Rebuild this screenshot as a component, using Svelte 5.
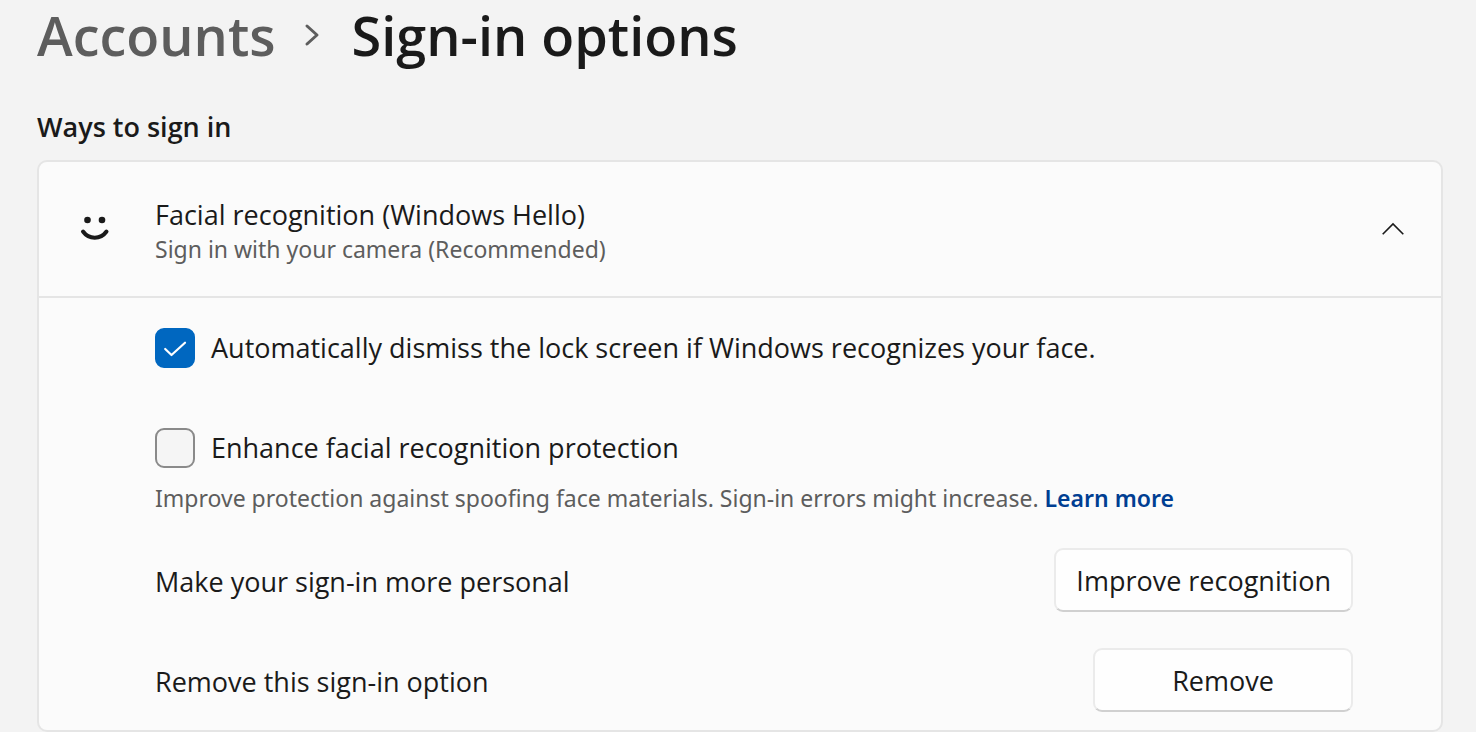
<script>
  let dismiss = true;
  let enhance = false;
  let open = true;
</script>

<style>
  :global(body) {
    background: #f3f3f3;
    color: #1a1a1a;
    font-family: "Segoe UI", "Open Sans", "Noto Sans", sans-serif;
    font-size: 27px;
    line-height: 36px;
  }

  main {
    padding: 0 33px 0 37px;
  }

  nav {
    display: flex;
    align-items: center;
    height: 70px;
    font-size: 54px;
    font-weight: 600;
    line-height: 70px;
  }

  nav a {
    color: #5d5d5d;
    text-decoration: none;
  }

  nav svg {
    margin: 0 32px 0 28px;
  }

  h1 {
    margin: 0;
    font-size: 54px;
    font-weight: 600;
  }

  h2 {
    margin: 39px 0 15px;
    font-size: 27px;
    font-weight: 600;
  }

  .card {
    border: 2px solid #e5e5e5;
    border-radius: 10px;
    background: #fbfbfb;
  }

  .header {
    display: flex;
    align-items: center;
    width: 100%;
    height: 134px;
    padding: 0 36px 0 40px;
    border: 0;
    background: none;
    color: inherit;
    font: inherit;
    text-align: left;
  }

  .titles {
    flex: 1;
    margin-left: 44px;
    padding-top: 4px;
  }

  .titles span {
    display: block;
  }

  .titles .sub,
  .note {
    color: #5d5d5d;
    font-family: "Segoe UI", "Noto Sans", sans-serif;
    font-size: 23px;
    line-height: 32px;
  }

  .body {
    padding: 30px 88px 18px 116px;
    border-top: 2px solid #e5e5e5;
  }

  label {
    display: flex;
    align-items: center;
    gap: 16px;
    height: 40px;
  }

  .box {
    display: grid;
  }

  .box > * {
    grid-area: 1 / 1;
  }

  .box svg {
    pointer-events: none;
  }

  input {
    appearance: none;
    width: 40px;
    height: 40px;
    margin: 0;
    border: 2px solid #8a8a8a;
    border-radius: 9px;
    background: #f5f5f5;
  }

  input:checked {
    border-color: #0067c0;
    background: #0067c0;
  }

  .enhance {
    margin-top: 60px;
  }

  .note {
    margin: 14px 0 34px;
  }

  .note a {
    color: #003e92;
    font-weight: 600;
    text-decoration: none;
  }

  .row {
    display: flex;
    align-items: center;
    justify-content: space-between;
    height: 64px;
  }

  .row + .row {
    margin-top: 36px;
  }

  .row span {
    padding-top: 4px;
  }

  .row button {
    min-width: 260px;
    height: 64px;
    padding: 2px 20px 0;
    border: 2px solid #ebebeb;
    border-bottom-color: #d0d0d0;
    border-radius: 9px;
    background: #fefefe;
    color: inherit;
    font: inherit;
  }
</style>

<main>
  <nav>
    <a href="#accounts">Accounts</a>
    <svg width="16" height="24" viewBox="0 0 16 24" fill="none" stroke="#5d5d5d" stroke-width="3" stroke-linecap="round" stroke-linejoin="round">
      <path d="M3 3l10 9-10 9" />
    </svg>
    <h1>Sign-in options</h1>
  </nav>

  <h2>Ways to sign in</h2>

  <section class="card">
    <button class="header" aria-expanded={open} on:click={() => (open = !open)}>
      <svg width="32" height="32" viewBox="0 0 32 32" fill="#1a1a1a">
        <circle cx="8.5" cy="7" r="3.3" />
        <circle cx="23" cy="7" r="3.3" />
        <path d="M4 18.5C10 26.8 21.5 26.8 27.5 18.5" fill="none" stroke="#1a1a1a" stroke-width="4" stroke-linecap="round" />
      </svg>
      <span class="titles">
        <span>Facial recognition (Windows Hello)</span>
        <span class="sub">Sign in with your camera (Recommended)</span>
      </span>
      <svg width="24" height="14" viewBox="0 0 24 14" fill="none" stroke="#1a1a1a" stroke-width="1.6">
        <path d="M1.7 12.3L12 2l10.3 10.3" />
      </svg>
    </button>

    {#if open}
      <div class="body">
        <label>
          <span class="box">
            <input type="checkbox" bind:checked={dismiss} />
            {#if dismiss}
              <svg width="40" height="40" viewBox="0 0 40 40" fill="none" stroke="#fff" stroke-width="2.2" stroke-linecap="round" stroke-linejoin="round">
                <path d="M10.2 21l6.3 6L30 14.7" />
              </svg>
            {/if}
          </span>
          Automatically dismiss the lock screen if Windows recognizes your face.
        </label>
        <label class="enhance">
          <span class="box">
            <input type="checkbox" bind:checked={enhance} />
            {#if enhance}
              <svg width="40" height="40" viewBox="0 0 40 40" fill="none" stroke="#fff" stroke-width="2.2" stroke-linecap="round" stroke-linejoin="round">
                <path d="M10.2 21l6.3 6L30 14.7" />
              </svg>
            {/if}
          </span>
          Enhance facial recognition protection
        </label>
        <p class="note">
          Improve protection against spoofing face materials. Sign-in errors might increase.
          <a href="#learn">Learn more</a>
        </p>
        <div class="row">
          <span>Make your sign-in more personal</span>
          <button>Improve recognition</button>
        </div>
        <div class="row">
          <span>Remove this sign-in option</span>
          <button>Remove</button>
        </div>
      </div>
    {/if}
  </section>
</main>
